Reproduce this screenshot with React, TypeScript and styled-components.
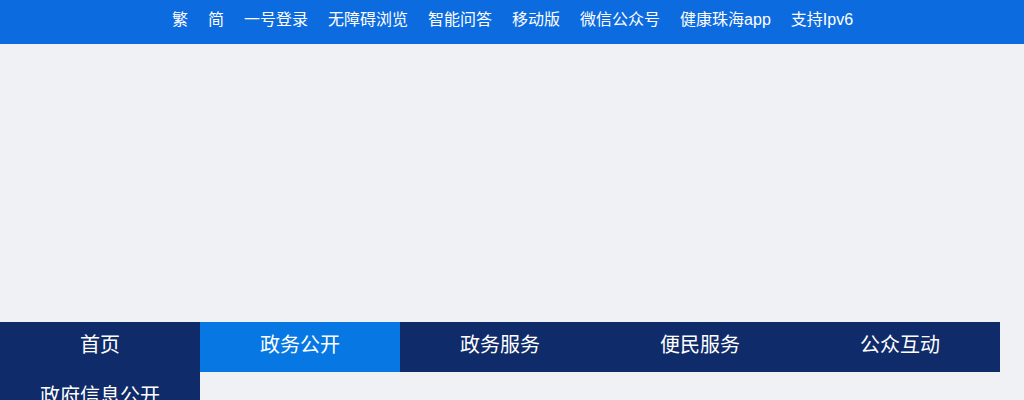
import React from 'react'
import styled, { createGlobalStyle } from 'styled-components'

const GlobalStyle = createGlobalStyle`
  html, body {
    margin: 0;
    padding: 0;
    background: #f0f1f5;
    font-family: "Liberation Sans", "Noto Sans CJK SC", sans-serif;
    overflow: hidden;
  }
`

const topLinks = ['繁', '简', '一号登录', '无障碍浏览', '智能问答', '移动版', '微信公众号', '健康珠海app', '支持Ipv6']

const navItems = ['首页', '政务公开', '政务服务', '便民服务', '公众互动']

function App() {
  return (
    <Page>
      <GlobalStyle />
      <TopBar>
        {topLinks.map((t) => (
          <TopLink key={t}>{t}</TopLink>
        ))}
      </TopBar>
      <Banner />
      <Nav>
        {navItems.map((n, i) => (
          <NavItem key={n} active={i === 1}>
            {n}
            {i === 0 && (
              <Dropdown>
                <DropItem>政府信息公开</DropItem>
              </Dropdown>
            )}
          </NavItem>
        ))}
      </Nav>
    </Page>
  )
}

export default App

const Page = styled.div`
  width: 1024px;
  height: 400px;
  overflow: hidden;
`

const TopBar = styled.div`
  height: 44px;
  background: #0d6be0;
  display: flex;
  justify-content: center;
  align-items: center;
  gap: 20px;
  padding-left: 1px;
  padding-bottom: 4px;
  box-sizing: border-box;
`

const TopLink = styled.a`
  color: #fff;
  font-size: 16px;
  line-height: 20px;
  cursor: pointer;
`

const Banner = styled.div`
  height: 278px;
`

const Nav = styled.ul`
  list-style: none;
  margin: 0;
  padding: 0;
  width: 1000px;
  height: 50px;
  display: flex;
  background: #0f2b69;
`

const NavItem = styled.li<{ active?: boolean }>`
  position: relative;
  width: 200px;
  height: 50px;
  display: flex;
  justify-content: center;
  align-items: center;
  padding-bottom: 8px;
  box-sizing: border-box;
  color: #fff;
  font-size: 20px;
  background: ${(p) => (p.active ? '#0777e3' : 'transparent')};
`

const Dropdown = styled.div`
  position: absolute;
  top: 50px;
  left: 0;
  width: 200px;
  background: #0f2b69;
`

const DropItem = styled.div`
  height: 50px;
  display: flex;
  justify-content: center;
  align-items: center;
  padding-bottom: 6px;
  box-sizing: border-box;
  color: #fff;
  font-size: 20px;
`
